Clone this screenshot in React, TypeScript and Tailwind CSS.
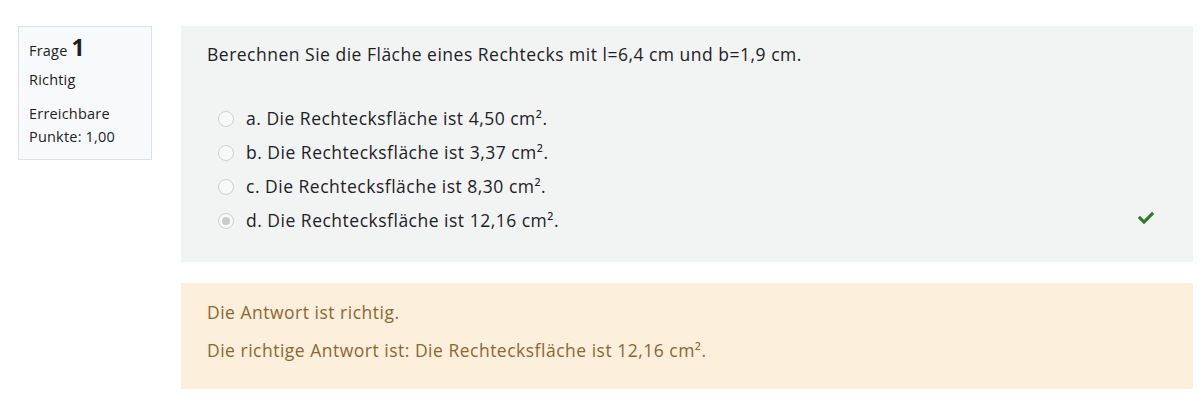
import React from 'react';

const options = [
  { label: 'a.', text: 'Die Rechtecksfläche ist 4,50 cm².', checked: false },
  { label: 'b.', text: 'Die Rechtecksfläche ist 3,37 cm².', checked: false },
  { label: 'c.', text: 'Die Rechtecksfläche ist 8,30 cm².', checked: false },
  { label: 'd.', text: 'Die Rechtecksfläche ist 12,16 cm².', checked: true },
];

function Radio({ checked }: { checked: boolean }) {
  return (
    <span className="flex h-[16px] w-[16px] shrink-0 items-center justify-center rounded-full border-[1.5px] border-[#cdd0d2] bg-[#f7f8f8]">
      {checked && <span className="h-[8px] w-[8px] rounded-full bg-[#c9ccce]" />}
    </span>
  );
}

export default function App() {
  return (
    <div
      className="flex h-[400px] w-[1200px] items-start bg-white pl-[18px] pr-[7px] pt-[26px] text-[#1d2125]"
      style={{ fontFamily: '"Open Sans", "Noto Sans", sans-serif' }}
    >
      <div className="h-[134px] w-[134px] shrink-0 border border-[#dee2e6] bg-[#f8f9fa] px-[10px] pt-[9px] text-[14.5px] leading-[23px] tracking-[0.2px]">
        <div className="flex h-[23px] items-baseline gap-[4px]">
          <span>Frage</span>
          <span className="text-[23px] font-bold leading-[23px]">1</span>
        </div>
        <div className="mt-[9px]">Richtig</div>
        <div className="mt-[11px]">
          Erreichbare
          <br />
          Punkte: 1,00
        </div>
      </div>

      <div className="ml-[29px] flex flex-1 flex-col gap-[21px] text-[17.5px] leading-[25px] tracking-[0.5px]">
        <div className="h-[236px] bg-[#f2f3f3] pl-[26px] pr-[38px] pt-[16px]">
          <div>Berechnen Sie die Fläche eines Rechtecks mit l=6,4 cm und b=1,9 cm.</div>
          <div className="mt-[39px] flex flex-col gap-[9px] pl-[11px]">
            {options.map((o) => (
              <div key={o.label} className="flex h-[25px] items-center">
                <Radio checked={o.checked} />
                <span className="ml-[12px]">
                  {o.label} {o.text}
                </span>
                {o.checked && (
                  <svg
                    viewBox="0 0 512 512"
                    className="ml-auto mt-[-6px] h-[16px] w-[18px] fill-[#357a32]"
                  >
                    <path d="M173.9 439.4l-166.4-166.4c-10-10-10-26.2 0-36.2l36.2-36.2c10-10 26.2-10 36.2 0L192 312.7 432.1 72.6c10-10 26.2-10 36.2 0l36.2 36.2c10 10 10 26.2 0 36.2l-294.4 294.4c-10 10-26.2 10-36.2 0z" />
                  </svg>
                )}
              </div>
            ))}
          </div>
        </div>

        <div className="h-[106px] bg-[#fcefdc] pl-[26px] pt-[17px] text-[#8e662e]">
          <div>Die Antwort ist richtig.</div>
          <div className="mt-[13px]">Die richtige Antwort ist: Die Rechtecksfläche ist 12,16 cm².</div>
        </div>
      </div>
    </div>
  );
}
